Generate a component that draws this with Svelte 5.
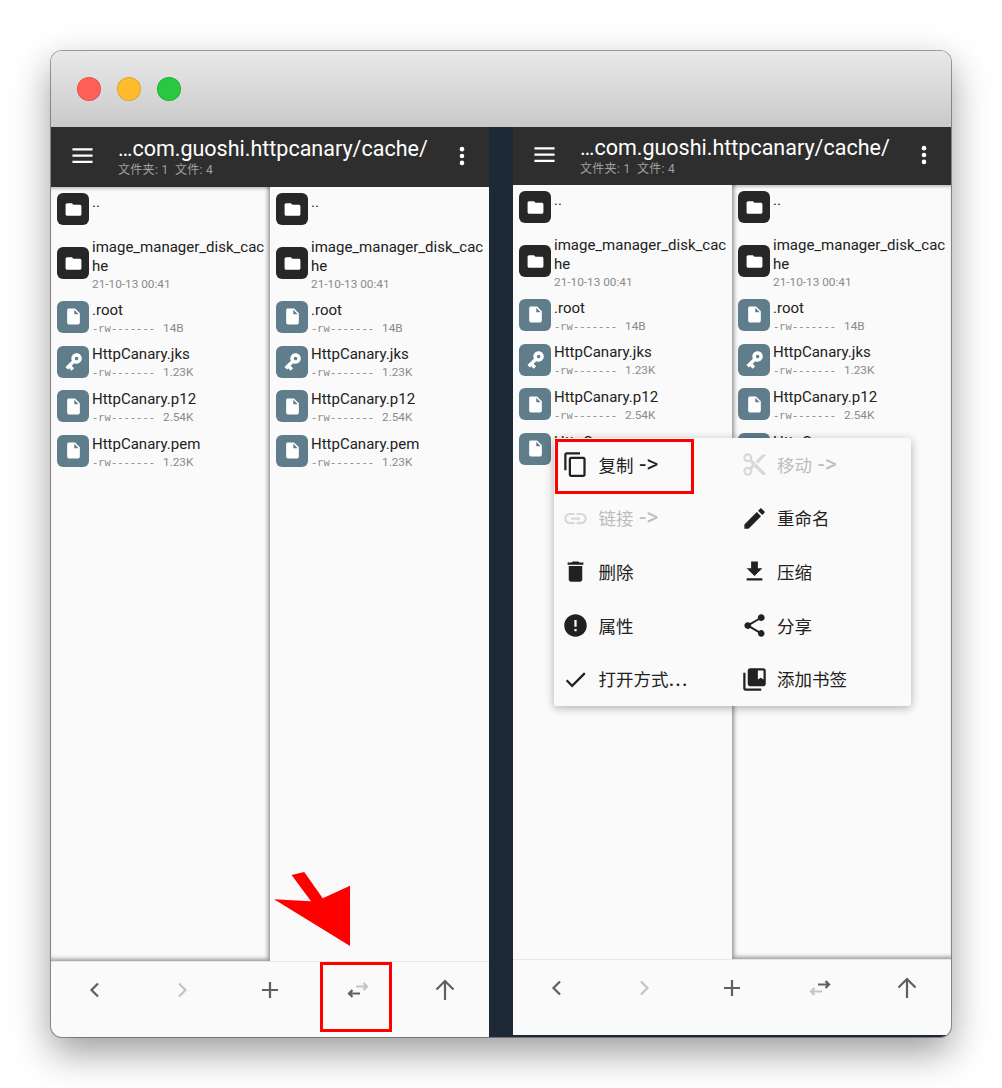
<script>
  const icons = {
    folder: 'M10 4H4c-1.1 0-2 .9-2 2v12c0 1.1.9 2 2 2h16c1.1 0 2-.9 2-2V8c0-1.1-.9-2-2-2h-8l-2-2z',
    file: 'M6 2c-1.1 0-1.99.9-1.99 2L4 20c0 1.1.89 2 1.99 2H18c1.1 0 2-.9 2-2V8l-6-6H6zm7 7V3.5L18.5 9H13z',
    key: 'M12.65 10C11.83 7.67 9.61 6 7 6c-3.31 0-6 2.69-6 6s2.69 6 6 6c2.61 0 4.83-1.67 5.65-4H17v4h4v-4h2v-4H12.65zM7 14c-1.1 0-2-.9-2-2s.9-2 2-2 2 .9 2 2-.9 2-2 2z',
    copy: 'M16 1H4c-1.1 0-2 .9-2 2v14h2V3h12V1zm3 4H8c-1.1 0-2 .9-2 2v14c0 1.1.9 2 2 2h11c1.1 0 2-.9 2-2V7c0-1.1-.9-2-2-2zm0 16H8V7h11v14z',
    cut: 'M9.64 7.64c.23-.5.36-1.05.36-1.64 0-2.21-1.79-4-4-4S2 3.79 2 6s1.79 4 4 4c.59 0 1.14-.13 1.64-.36L10 12l-2.36 2.36C7.14 14.13 6.59 14 6 14c-2.21 0-4 1.79-4 4s1.79 4 4 4 4-1.79 4-4c0-.59-.13-1.14-.36-1.64L12 14l7 7h3v-1L9.64 7.64zM6 8c-1.1 0-2-.89-2-2s.9-2 2-2 2 .89 2 2-.9 2-2 2zm0 12c-1.1 0-2-.89-2-2s.9-2 2-2 2 .89 2 2-.9 2-2 2zm6-7.5c-.28 0-.5-.22-.5-.5s.22-.5.5-.5.5.22.5.5-.22.5-.5.5zM19 3l-6 6 2 2 7-7V3z',
    link: 'M3.9 12c0-1.71 1.39-3.1 3.1-3.1h4V7H7c-2.76 0-5 2.24-5 5s2.24 5 5 5h4v-1.9H7c-1.71 0-3.1-1.39-3.1-3.1zM8 13h8v-2H8v2zm9-6h-4v1.9h4c1.71 0 3.1 1.39 3.1 3.1s-1.39 3.1-3.1 3.1h-4V17h4c2.76 0 5-2.24 5-5s-2.24-5-5-5z',
    edit: 'M3 17.25V21h3.75L17.81 9.94l-3.75-3.75L3 17.25zM20.71 7.04c.39-.39.39-1.02 0-1.41l-2.34-2.34c-.39-.39-1.02-.39-1.41 0l-1.83 1.83 3.75 3.75 1.83-1.83z',
    trash: 'M6 19c0 1.1.9 2 2 2h8c1.1 0 2-.9 2-2V7H6v12zM19 4h-3.5l-1-1h-5l-1 1H5v2h14V4z',
    download: 'M19 9h-4V3H9v6H5l7 7 7-7zM5 18v2h14v-2H5z',
    error: 'M12 2C6.48 2 2 6.48 2 12s4.48 10 10 10 10-4.48 10-10S17.52 2 12 2zm1 15h-2v-2h2v2zm0-4h-2V7h2v6z',
    share: 'M18 16.08c-.76 0-1.44.3-1.96.77L8.91 12.7c.05-.23.09-.46.09-.7s-.04-.47-.09-.7l7.05-4.11c.54.5 1.25.81 2.04.81 1.66 0 3-1.34 3-3s-1.34-3-3-3-3 1.34-3 3c0 .24.04.47.09.7L8.04 9.81C7.5 9.31 6.79 9 6 9c-1.66 0-3 1.34-3 3s1.34 3 3 3c.79 0 1.5-.31 2.04-.81l7.12 4.16c-.05.21-.08.43-.08.65 0 1.61 1.31 2.92 2.92 2.92s2.92-1.31 2.92-2.92-1.31-2.92-2.92-2.92z',
    check: 'M9 16.17L4.83 12l-1.41 1.41L9 19 21 7l-1.41-1.41z',
    bookmarks: 'M4 6H2v14c0 1.1.9 2 2 2h14v-2H4V6zm16-4H8c-1.1 0-2 .9-2 2v12c0 1.1.9 2 2 2h12c1.1 0 2-.9 2-2V4c0-1.1-.9-2-2-2zm0 10l-2.5-1.5L15 12V4h5v8z'
  };

  const files = [
    { name: '..', icon: 'folder' },
    { name: 'image_manager_disk_cache', icon: 'folder', date: '21-10-13 00:41' },
    { name: '.root', icon: 'file', mode: '-rw-------', size: '14B' },
    { name: 'HttpCanary.jks', icon: 'key', mode: '-rw-------', size: '1.23K' },
    { name: 'HttpCanary.p12', icon: 'file', mode: '-rw-------', size: '2.54K' },
    { name: 'HttpCanary.pem', icon: 'file', mode: '-rw-------', size: '1.23K' }
  ];

  const menu = [
    { label: '复制', tail: '->', icon: 'copy' },
    { label: '移动', tail: '->', icon: 'cut', disabled: true },
    { label: '链接', tail: '->', icon: 'link', disabled: true },
    { label: '重命名', icon: 'edit' },
    { label: '删除', icon: 'trash' },
    { label: '压缩', icon: 'download' },
    { label: '属性', icon: 'error' },
    { label: '分享', icon: 'share' },
    { label: '打开方式', tail: '...', icon: 'check', tight: true },
    { label: '添加书签', icon: 'bookmarks' }
  ];
</script>

{#snippet list(active)}
  <div class="list" class:active>
    {#each files as f}
      <div class="row">
        <span class="thumb" class:dir={f.icon === 'folder'}>
          <svg viewBox="0 0 24 24" class:key={f.icon === 'key'}><path d={icons[f.icon]} /></svg>
        </span>
        <div class="info">
          <div class="name">{f.name}</div>
          {#if f.date}
            <div class="sub">{f.date}</div>
          {:else if f.mode}
            <div class="sub"><span class="mode">{f.mode}</span>{f.size}</div>
          {/if}
        </div>
      </div>
    {/each}
  </div>
{/snippet}

{#snippet phone(side)}
  <section class="phone {side}">
    <header class="appbar">
      <svg class="burger" viewBox="0 0 24 24"><path d="M1.500 4.500h21v2.200h-21zM1.500 11h21v2.200h-21zM1.500 17.500h21v2.200h-21z" /></svg>
      <div class="heading">
        <div class="path">…com.guoshi.httpcanary/cache/</div>
        <div class="counts">文件夹: 1&nbsp; 文件: 4</div>
      </div>
      <svg class="more" viewBox="0 0 24 24"><circle cx="12" cy="4.5" r="2.5" /><circle cx="12" cy="12" r="2.5" /><circle cx="12" cy="19.5" r="2.5" /></svg>
    </header>
    <div class="panes">
      {@render list(side === 'left')}
      {@render list(side === 'right')}
    </div>
    <footer class="toolbar">
      <span class="tool"><svg viewBox="0 0 24 24"><path d="M15 5.500l-6.500 6.500 6.500 6.500" /></svg></span>
      <span class="tool off"><svg viewBox="0 0 24 24"><path d="M9 5.500l6.500 6.500-6.500 6.500" /></svg></span>
      <span class="tool"><svg viewBox="0 0 24 24"><path d="M12 4v16M4 12h16" /></svg></span>
      <span class="tool swap">
        <svg viewBox="0 0 24 24">
          <path class:dim={side === 'left'} d="M10 8.500h11M17.500 5l3.500 3.500-3.500 3.500" />
          <path class:dim={side === 'right'} d="M14 15.500H3M6.500 12L3 15.500 6.500 19" />
        </svg>
      </span>
      <span class="tool"><svg viewBox="0 0 24 24"><path d="M12 22V3.500M3.500 11.500L12 3l8.500 8.500" /></svg></span>
    </footer>

    {#if side === 'left'}
      <span class="mark swap-mark"></span>
      <svg class="pointer" viewBox="0 0 80 78"><polygon points="18,3 31,0 50,27 78,14 78,76 0,28 38,30" /></svg>
    {:else}
      <div class="menu">
        {#each menu as m}
          <div class="item" class:disabled={m.disabled}>
            <svg viewBox="0 0 24 24"><path d={icons[m.icon]} /></svg>
            <span>{m.label}{#if m.tail}<span class="tail" class:tight={m.tight}>{m.tail}</span>{/if}</span>
          </div>
        {/each}
      </div>
      <span class="mark copy-mark"></span>
    {/if}
  </section>
{/snippet}

<div class="window">
  <div class="titlebar">
    <span class="light red"></span>
    <span class="light yellow"></span>
    <span class="light green"></span>
  </div>
  <div class="screens">
    {@render phone('left')}
    {@render phone('right')}
  </div>
</div>

<style>
  :global(body) {
    margin: 0;
    background: #fff;
  }

  .window {
    width: 900px;
    height: 986px;
    margin: 51px 0 51px 51px;
    border-radius: 11px;
    overflow: hidden;
    box-shadow: 0 0 0 1px rgba(0, 0, 0, 0.35), 0 15px 38px rgba(0, 0, 0, 0.4);
    font-family: Roboto, "Noto Sans CJK SC", sans-serif;
  }

  .titlebar {
    height: 76px;
    padding-left: 26px;
    display: flex;
    align-items: center;
    gap: 16px;
    background: linear-gradient(#e9e9e9, #c9c9c9);
  }

  .light {
    width: 24px;
    height: 24px;
    box-sizing: border-box;
    border-radius: 50%;
    border: 1px solid rgba(0, 0, 0, 0.12);
  }
  .red { background: #ff5f57; }
  .yellow { background: #febc2e; }
  .green { background: #28c840; }

  .screens {
    height: 910px;
    display: flex;
    justify-content: space-between;
    background: #1d2935;
  }

  .phone {
    position: relative;
    width: 438px;
    display: flex;
    flex-direction: column;
    background: #fafafa;
  }
  .phone.right {
    height: 908px;
  }

  .appbar {
    height: 60px;
    flex-shrink: 0;
    display: flex;
    align-items: center;
    box-sizing: border-box;
    padding: 0 16px 0 20px;
    background: #2e2e2e;
    color: #fff;
  }
  .right .appbar {
    height: 58px;
  }

  .burger {
    width: 23px;
    height: 23px;
    margin-top: -3px;
    fill: #fff;
  }

  .heading {
    flex: 1;
    margin-left: 24px;
  }

  .path {
    font-size: 21.5px;
    line-height: 26px;
    white-space: nowrap;
  }

  .counts {
    font-size: 12px;
    line-height: 16px;
    letter-spacing: 0.3px;
    color: #a0a0a0;
  }

  .more {
    width: 22px;
    height: 22px;
    margin-top: -2px;
    fill: #fff;
  }

  .panes {
    height: 774px;
    display: flex;
  }

  .list {
    width: 219px;
    box-sizing: border-box;
    background: #fafafa;
  }
  .list.active {
    box-shadow: inset -3px -3px 4px -1px rgba(0, 0, 0, 0.4), inset 0 3px 3px -1px rgba(0, 0, 0, 0.22);
  }
  .right .list.active {
    box-shadow: inset 3px -3px 4px -1px rgba(0, 0, 0, 0.4), inset 0 3px 3px -1px rgba(0, 0, 0, 0.22);
  }

  .row {
    display: flex;
    align-items: center;
    gap: 3px;
    min-height: 44.67px;
    box-sizing: border-box;
    padding: 6px 2px 3px 6px;
  }

  .thumb {
    width: 32px;
    height: 32px;
    flex-shrink: 0;
    display: flex;
    align-items: center;
    justify-content: center;
    margin-top: -3px;
    border-radius: 6px;
    background: #607d8b;
  }
  .thumb.dir {
    background: #272727;
  }
  .thumb svg {
    width: 19px;
    height: 19px;
    fill: #fff;
  }
  .thumb svg.key {
    width: 21px;
    height: 21px;
    transform: rotate(135deg) scaleY(-1);
  }

  .info {
    align-self: flex-start;
    min-width: 0;
  }

  .name {
    font-size: 15px;
    line-height: 19px;
    color: #212121;
    word-break: break-all;
  }

  .sub {
    height: 16px;
    font-size: 11.8px;
    line-height: 16px;
    color: #8a8a8a;
  }

  .mode {
    display: inline-block;
    width: 71px;
    font-family: "Liberation Mono", monospace;
    font-size: 10.5px;
    line-height: 1;
  }

  .toolbar {
    height: 76px;
    flex-shrink: 0;
    display: flex;
    box-sizing: border-box;
    padding-top: 16px;
    border-top: 1px solid #e6e6e6;
  }

  .tool {
    flex: 1;
    display: flex;
    justify-content: center;
    height: 24px;
  }
  .tool svg {
    width: 24px;
    height: 24px;
    fill: none;
    stroke: #5f5f5f;
    stroke-width: 2.2;
  }
  .tool.off svg {
    stroke: #c4c4c4;
  }
  .swap path.dim {
    stroke: #c4c4c4;
  }

  .mark {
    position: absolute;
    box-sizing: border-box;
    border: 3px solid #f00;
  }
  .swap-mark {
    left: 269px;
    top: 835px;
    width: 72px;
    height: 70px;
  }
  .copy-mark {
    left: 42px;
    top: 312px;
    width: 139px;
    height: 55px;
  }

  .pointer {
    position: absolute;
    left: 223px;
    top: 745px;
    width: 78px;
    height: 76px;
    fill: #f00;
  }

  .menu {
    position: absolute;
    left: 41px;
    top: 311px;
    width: 357px;
    height: 268px;
    display: grid;
    grid-template-columns: 1fr 1fr;
    grid-auto-rows: 1fr;
    border-radius: 3px;
    background: #fafafa;
    box-shadow: 0 2px 10px rgba(0, 0, 0, 0.3);
    font-family: "Noto Sans CJK SC", sans-serif;
  }

  .item {
    display: flex;
    align-items: center;
    gap: 9.5px;
    padding-left: 8px;
    font-size: 17.5px;
    line-height: 24px;
    color: #212121;
  }
  .item svg {
    width: 27px;
    height: 27px;
    fill: #212121;
  }
  .item.disabled {
    color: #bdbdbd;
  }
  .item.disabled svg {
    fill: #d8d8d8;
  }

  .tail {
    margin-left: 6px;
    font-family: Roboto, sans-serif;
    font-size: 23px;
    letter-spacing: 0.5px;
  }
  .tail.tight {
    margin-left: 0;
  }
</style>
